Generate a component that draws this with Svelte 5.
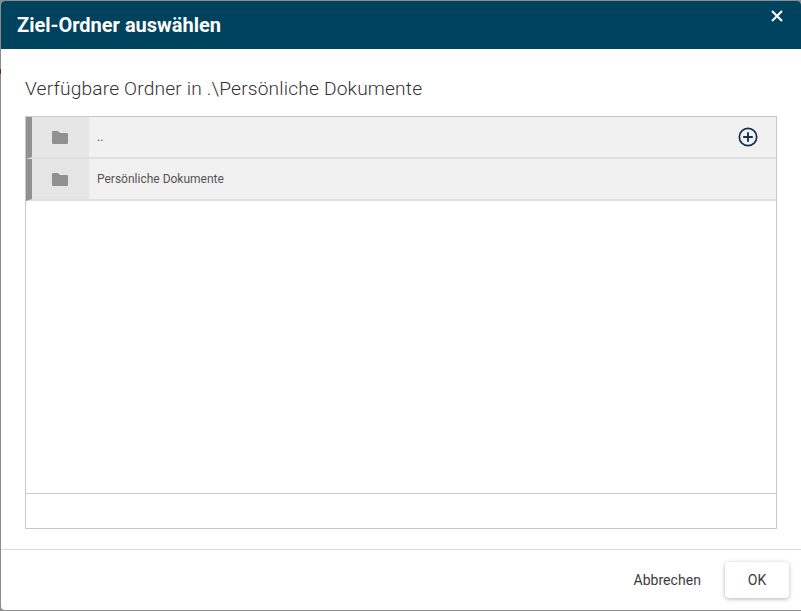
<script>
  const rows = [
    { name: '..', add: true },
    { name: 'Persönliche Dokumente', add: false }
  ];
</script>

<div class="page">
  <span class="mark"></span>
  <div class="dialog">
    <header class="head">
      <h1>Ziel-Ordner auswählen</h1>
      <button class="close" aria-label="Schließen">
        <svg viewBox="0 0 12 12" width="12" height="12"><path d="M1 1 L11 11 M11 1 L1 11" stroke="#fff" stroke-width="2" fill="none"/></svg>
      </button>
    </header>
    <main class="body">
      <h2>Verfügbare Ordner in .\Persönliche Dokumente</h2>
      <div class="box">
        <div class="list">
          {#each rows as row}
            <div class="row">
              <div class="iconcell">
                <svg viewBox="0 0 16 13" width="16" height="13"><path d="M0 1 Q0 0 1 0 H6 L8 2 H15 Q16 2 16 3 V12 Q16 13 15 13 H1 Q0 13 0 12 Z" fill="#919191"/></svg>
              </div>
              <div class="name">{row.name}</div>
              {#if row.add}
                <svg class="add" viewBox="0 0 20 20" width="20" height="20"><circle cx="10" cy="10" r="8.7" fill="none" stroke="#12304f" stroke-width="1.7"/><path d="M10 5.2 V14.8 M5.2 10 H14.8" stroke="#12304f" stroke-width="1.9" fill="none"/></svg>
              {/if}
            </div>
          {/each}
        </div>
        <div class="boxfoot"></div>
      </div>
    </main>
    <footer class="foot">
      <button class="text">Abbrechen</button>
      <button class="ok">OK</button>
    </footer>
  </div>
</div>

<style>
  :global(body) { margin: 0; background: #8c8c8c; }
  .page {
    height: 611px;
    box-sizing: border-box;
    padding: 1px 0 1px 1px;
    display: flex;
    font-family: Roboto, sans-serif;
    position: relative;
  }
  .mark {
    position: absolute;
    left: 0;
    top: 69px;
    width: 1px;
    height: 5px;
    background: #6b2a10;
  }
  .dialog {
    flex: 1;
    display: flex;
    flex-direction: column;
    background: #fff;
    border-radius: 4px 4px 0 4px;
    overflow: hidden;
  }
  .head {
    height: 48px;
    flex: none;
    background: #00435f;
    display: flex;
    align-items: center;
    justify-content: space-between;
    padding: 0 18px 0 16px;
  }
  h1 {
    margin: 0;
    font-size: 20px;
    font-weight: 700;
    color: #fff;
    line-height: 50px;
  }
  .close {
    border: 0;
    background: none;
    padding: 0;
    height: 12px;
    align-self: flex-start;
    margin-top: 9px;
    display: flex;
  }
  .body {
    flex: 1;
    padding: 0 24px 20px;
    display: flex;
    flex-direction: column;
    min-height: 0;
  }
  h2 {
    margin: 29px 0 16px;
    font-size: 19.2px;
    line-height: 22px;
    font-weight: 300;
    color: #333;
    letter-spacing: 0.16px;
  }
  .box {
    flex: 1;
    border: 1px solid #c8c8c8;
    display: flex;
    flex-direction: column;
  }
  .list { flex: 1; }
  .row {
    height: 40px;
    background: #f1f1f1;
    border-bottom: 2px solid #e0e0e0;
    border-left: 6px solid #919191;
    display: flex;
    align-items: center;
    position: relative;
  }
  .iconcell {
    width: 57px;
    height: 100%;
    background: #e6e6e6;
    display: flex;
    align-items: center;
    justify-content: center;
  }
  .iconcell svg { margin-right: 2px; }
  .name {
    margin-left: 8px;
    font-size: 12px;
    color: #555;
  }
  .add { position: absolute; right: 18px; top: 10px; }
  .boxfoot {
    height: 34px;
    flex: none;
    border-top: 1px solid #c8c8c8;
  }
  .foot {
    flex: none;
    height: 60px;
    border-top: 1px solid #dcdcdc;
    display: flex;
    align-items: center;
    justify-content: flex-end;
    padding-right: 12px;
    gap: 8px;
    box-sizing: content-box;
  }
  button { font-family: inherit; cursor: pointer; }
  .text, .ok {
    font-size: 14px;
    color: #3c3c3c;
    border: 0;
    background: #fff;
    height: 36px;
    border-radius: 4px;
  }
  .text { padding: 0 16px; letter-spacing: 0.05px; }
  .ok {
    width: 64px;
    box-shadow: 0 1px 4px rgba(0,0,0,.3);
  }
</style>
